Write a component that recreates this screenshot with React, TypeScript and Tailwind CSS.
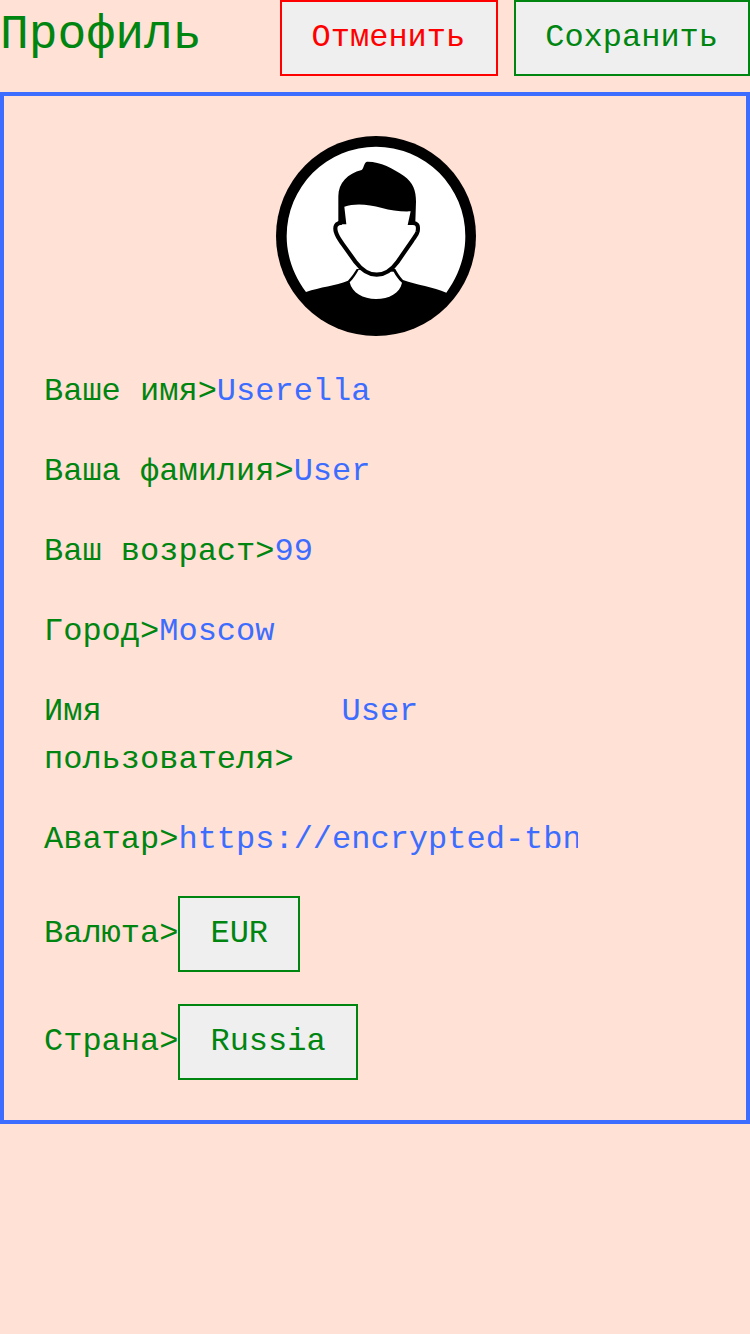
import clsx from "clsx";

function Avatar() {
  return (
    <svg viewBox="18 18 600 600" className="h-[200px] w-[200px]" role="img">
      <circle cx="318" cy="318" r="300" fill="#000" />
      <path
        d="M108 486 C72 438 50 380 50 318 A268 268 0 0 1 586 318 C586 380 566 436 529 488 C490 471 440 465 399 450 C389 440 382 427 376 417 L260 417 C252 429 245 441 234 452 C197 467 150 471 108 486 Z"
        fill="#fff"
      />
      <path
        d="M239 457 C250 446 259 432 266 419 L371 425 C378 438 386 449 396 458 C390 489 357 507 318 507 C279 507 246 489 239 457 Z"
        fill="#fff"
      />
      <path
        d="M216 278 C197 279 193 290 198 307 C201 319 210 331 217 341 L256 395 C275 420 293 434 320 434 C347 434 365 420 383 395 L426 333 C434 321 441 314 443 304 C446 287 442 278 426 279 L422 240 L336 228 L223 226 Z"
        fill="#fff"
      />
      <path
        d="M216 278 C197 279 193 290 198 307 C201 319 210 331 217 341 L256 395 C275 420 293 434 320 434 C347 434 365 420 383 395 L426 333 C434 321 441 314 443 304 C446 287 442 278 426 279"
        fill="none"
        stroke="#000"
        strokeWidth="12.5"
      />
      <path
        d="M205 275 L205 199 C205 158 233 131 275 120 C282 115 281 98 291 95 C329 94 369 115 402 138 C429 158 438 181 438 215 L436 275 L430 285 L413 285 L422 244 C393 245 362 242 336 234 C294 222 254 219 223 230 L229 283 L210 283 Z"
        fill="#000"
      />
    </svg>
  );
}

function Button({ text, className }: { text: string; className: string }) {
  return (
    <button
      className={clsx(
        "flex h-[76px] shrink-0 items-start whitespace-nowrap border-2 bg-[#efefef] text-left text-[32px] leading-[71px]",
        className,
      )}
    >
      {text}
    </button>
  );
}

function Field({ label, value }: { label: string; value: string }) {
  return (
    <div className="flex h-12 items-start">
      <span className="shrink-0">{label}&gt;</span>
      <span className="w-[400px] overflow-hidden whitespace-nowrap text-[#3d6dff]">{value}</span>
    </div>
  );
}

function Choice({ label, value }: { label: string; value: string }) {
  return (
    <div className="flex items-center">
      <span>{label}&gt;</span>
      <Button text={value} className="border-[#008511] px-[30px]" />
    </div>
  );
}

export default function App() {
  return (
    <div className="min-h-screen w-[750px] bg-[#ffe1d6] font-['Liberation_Mono',monospace] text-[32px] leading-[48px] text-[#008511]">
      <header className="flex h-[76px] items-start justify-between">
        <h1 className="text-[48px] leading-[70px]">Профиль</h1>
        <div className="flex gap-4">
          <Button text="Отменить" className="w-[218px] border-[#ff0000] pl-[29.6px] text-[#ff0000]" />
          <Button text="Сохранить" className="w-[236px] border-[#008511] pl-[29.2px]" />
        </div>
      </header>
      <main className="mt-4 flex flex-col gap-8 border-4 border-[#3d6dff] p-10">
        <div className="flex justify-center pl-[2px]">
          <Avatar />
        </div>
        <Field label="Ваше имя" value="Userella" />
        <Field label="Ваша фамилия" value="User" />
        <Field label="Ваш возраст" value="99" />
        <Field label="Город" value="Moscow" />
        <div className="flex items-start">
          <span className="w-[297.5px]">Имя пользователя&gt;</span>
          <span className="text-[#3d6dff]">User</span>
        </div>
        <Field label="Аватар" value="https://encrypted-tbn" />
        <Choice label="Валюта" value="EUR" />
        <Choice label="Страна" value="Russia" />
      </main>
    </div>
  );
}
